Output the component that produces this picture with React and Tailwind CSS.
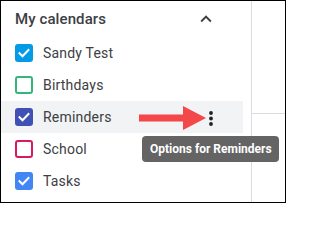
import React from 'react'

const calendars = [
  { name: 'Sandy Test', color: '#039be5', checked: true },
  { name: 'Birthdays', color: '#33b679', checked: false },
  { name: 'Reminders', color: '#3f51b5', checked: true, hover: true },
  { name: 'School', color: '#d81b60', checked: false },
  { name: 'Tasks', color: '#4285f4', checked: true },
]

const Check = ({ color, checked }) => (
  <span
    className="w-[18px] h-[18px] rounded-[3px] border-2 flex items-center justify-center shrink-0"
    style={{ borderColor: color, backgroundColor: checked ? color : 'transparent' }}
  >
    {checked && (
      <svg viewBox="0 0 14 14" className="w-[14px] h-[14px]" fill="none" stroke="white" strokeWidth={2}>
        <path d="M2.5 7.2l3 3 6-6.2" strokeLinecap="square" />
      </svg>
    )}
  </span>
)

export default function App() {
  return (
    <div className="relative w-[286px] h-[203px] border border-black bg-white overflow-hidden flex font-['Roboto',sans-serif] text-[#3c4043]">
      {/* calendar list */}
      <div className="w-[250px] shrink-0 pr-[8px]">
        <div className="h-[36px] flex items-center pl-[14px] pr-[26px] justify-between">
          <span className="text-[15px] font-medium tracking-[0.1px]">My calendars</span>
          <svg viewBox="0 0 24 24" className="w-[22px] h-[22px]" fill="#3c4043">
            <path d="M7.41 15.41L12 10.83l4.59 4.58L18 14l-6-6-6 6z" />
          </svg>
        </div>
        {calendars.map((c) => (
          <div
            key={c.name}
            className={`h-[32px] flex items-center pl-[14px] gap-[10px] ${c.hover ? 'bg-[#f1f3f4]' : ''}`}
          >
            <Check color={c.color} checked={c.checked} />
            <span className="text-[14px] tracking-[0.2px]">{c.name}</span>
          </div>
        ))}
      </div>

      {/* grid area */}
      <div className="flex-1 border-l border-[#dadce0] flex flex-col">
        <div className="h-[113px] border-b border-[#dadce0]" />
      </div>

      {/* arrow pointing at options */}
      <svg className="absolute left-[135px] top-[102px] w-[72px] h-[30px]" viewBox="0 0 72 30">
        <path d="M3 11.5 H47 V3 L70 15 L47 27 V18.5 H3 Z" fill="#f4474a" />
      </svg>

      {/* kebab */}
      <svg className="absolute left-[205px] top-[106px] w-[10px] h-[22px]" viewBox="0 0 10 22" fill="#202124">
        <circle cx="5" cy="6" r="1.9" />
        <circle cx="5" cy="11.5" r="1.9" />
        <circle cx="5" cy="17" r="1.9" />
      </svg>

      {/* tooltip */}
      <div className="absolute left-[141px] top-[135px] w-[137px] h-[26px] rounded-[4px] bg-[#646464] text-white text-[12px] font-bold flex items-center pl-[8px] whitespace-nowrap">
        Options for Reminders
      </div>
    </div>
  )
}
